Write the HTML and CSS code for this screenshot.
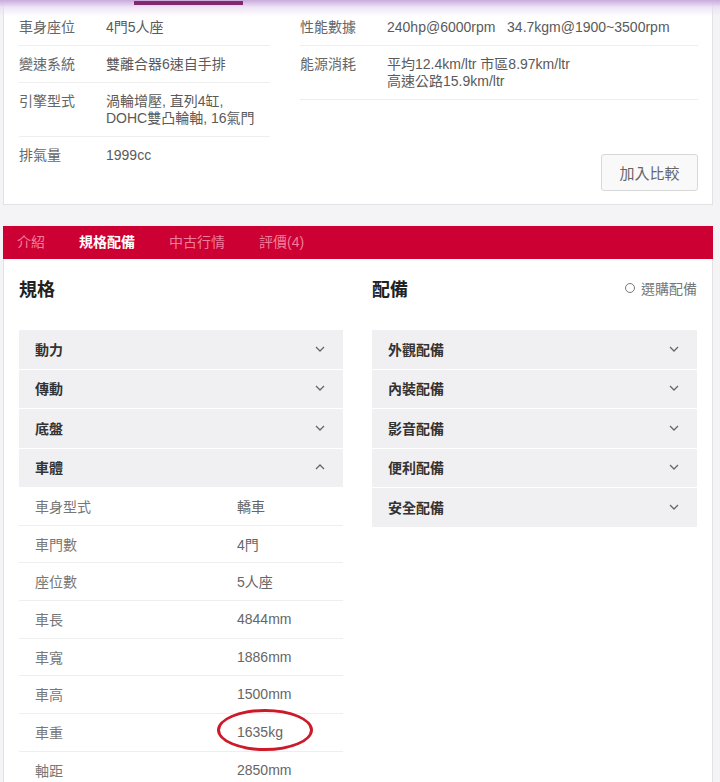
FILE: index.html
```html
<!DOCTYPE html>
<html lang="zh-Hant">
<head>
  <meta charset="UTF-8">
  <meta name="viewport" content="width=device-width, initial-scale=1.0">
  <title>規格配備</title>
  <link rel="stylesheet" href="styles.css">
</head>
<body>
  <div class="nav-shadow"><span class="nav-active"></span></div>

  <div class="page">
    <section class="summary">
      <div class="summary-col">
        <div class="summary-row"><span class="summary-label">車身座位</span><span class="summary-value">4門5人座</span></div>
        <div class="summary-row"><span class="summary-label">變速系統</span><span class="summary-value">雙離合器6速自手排</span></div>
        <div class="summary-row"><span class="summary-label">引擎型式</span><span class="summary-value">渦輪增壓, 直列4缸,<br>DOHC雙凸輪軸, 16氣門</span></div>
        <div class="summary-row"><span class="summary-label">排氣量</span><span class="summary-value">1999cc</span></div>
      </div>
      <div class="summary-col">
        <div class="summary-row"><span class="summary-label">性能數據</span><span class="summary-value">240hp@6000rpm&nbsp;&nbsp; 34.7kgm@1900~3500rpm</span></div>
        <div class="summary-row"><span class="summary-label">能源消耗</span><span class="summary-value">平均12.4km/ltr 市區8.97km/ltr<br>高速公路15.9km/ltr</span></div>
        <button class="compare-btn">加入比較</button>
      </div>
    </section>

    <nav class="tabs">
      <a class="tab">介紹</a>
      <a class="tab active">規格配備</a>
      <a class="tab">中古行情</a>
      <a class="tab">評價(4)</a>
    </nav>

    <section class="detail">
      <div class="detail-col">
        <div class="detail-head">
          <h2>規格</h2>
        </div>
        <div class="accordion">
          <div class="acc-item">動力<svg class="chev" viewBox="0 0 10 6"><polyline points="1,1 5,5 9,1"/></svg></div>
          <div class="acc-item">傳動<svg class="chev" viewBox="0 0 10 6"><polyline points="1,1 5,5 9,1"/></svg></div>
          <div class="acc-item">底盤<svg class="chev" viewBox="0 0 10 6"><polyline points="1,1 5,5 9,1"/></svg></div>
          <div class="acc-item">車體<svg class="chev" viewBox="0 0 10 6"><polyline points="1,5 5,1 9,5"/></svg></div>
          <div class="spec-list">
            <div class="spec-row"><span class="spec-label">車身型式</span><span class="spec-value">轎車</span></div>
            <div class="spec-row"><span class="spec-label">車門數</span><span class="spec-value">4門</span></div>
            <div class="spec-row"><span class="spec-label">座位數</span><span class="spec-value">5人座</span></div>
            <div class="spec-row"><span class="spec-label">車長</span><span class="spec-value">4844mm</span></div>
            <div class="spec-row"><span class="spec-label">車寬</span><span class="spec-value">1886mm</span></div>
            <div class="spec-row"><span class="spec-label">車高</span><span class="spec-value">1500mm</span></div>
            <div class="spec-row"><span class="spec-label">車重</span><span class="spec-value marked">1635kg<span class="mark-ring"></span></span></div>
            <div class="spec-row"><span class="spec-label">軸距</span><span class="spec-value">2850mm</span></div>
          </div>
        </div>
      </div>

      <div class="detail-col">
        <div class="detail-head">
          <h2>配備</h2>
          <span class="legend"><span class="legend-dot"></span>選購配備</span>
        </div>
        <div class="accordion">
          <div class="acc-item">外觀配備<svg class="chev" viewBox="0 0 10 6"><polyline points="1,1 5,5 9,1"/></svg></div>
          <div class="acc-item">內裝配備<svg class="chev" viewBox="0 0 10 6"><polyline points="1,1 5,5 9,1"/></svg></div>
          <div class="acc-item">影音配備<svg class="chev" viewBox="0 0 10 6"><polyline points="1,1 5,5 9,1"/></svg></div>
          <div class="acc-item">便利配備<svg class="chev" viewBox="0 0 10 6"><polyline points="1,1 5,5 9,1"/></svg></div>
          <div class="acc-item">安全配備<svg class="chev" viewBox="0 0 10 6"><polyline points="1,1 5,5 9,1"/></svg></div>
        </div>
      </div>
    </section>
  </div>
</body>
</html>
```

FILE: styles.css
```css
body {
  font-family: "Liberation Sans", "Noto Sans CJK TC", sans-serif;
  margin: 0;
  padding: 0;
  background-color: #f4f4f6;
  color: #333;
  font-size: 14px;
}

/* fixed header edge bleeding over the page top */
.nav-shadow {
  position: absolute;
  top: 0;
  left: 0;
  right: 0;
  height: 16px;
  background: linear-gradient(#c9aadc, rgba(232, 220, 242, 0.75) 45%, rgba(255, 255, 255, 0));
  z-index: 2;
}

.nav-active {
  position: absolute;
  left: 134px;
  top: 1px;
  width: 109px;
  height: 4px;
  background-color: #83286f;
}

.page {
  padding: 0 7px 0 3px;
}

/* summary card */
.summary {
  display: grid;
  grid-template-columns: 251px 1fr;
  column-gap: 30px;
  padding: 9px 14px 15px 15px;
  background-color: white;
  border: 1px solid #e2e2e4;
  border-top: none;
  height: 205px;
  box-sizing: border-box;
}

.summary-col {
  display: flex;
  flex-direction: column;
}

.summary-row {
  display: flex;
  padding: 10px 0 9px;
  line-height: 17px;
  border-bottom: 1px solid #eeeeee;
}

.summary-col:first-child .summary-row:last-child {
  border-bottom: none;
}

.summary-label {
  width: 87px;
  flex-shrink: 0;
  color: #666;
}

.summary-value {
  color: #5a5a5a;
}

.compare-btn {
  align-self: flex-end;
  margin-top: 54px;
  width: 97px;
  height: 37px;
  font-family: inherit;
  font-size: 15px;
  color: #666;
  background-color: #f9f9fa;
  border: 1px solid #d8d8d8;
  border-radius: 3px;
}

/* tab bar */
.tabs {
  display: flex;
  gap: 34px;
  margin-top: 21px;
  padding: 0 0 3px 14px;
  height: 33px;
  box-sizing: border-box;
  align-items: center;
  background-color: #cc0033;
}

.tab {
  color: #f07e9c;
  font-size: 14px;
}

.tab.active {
  color: white;
  font-weight: bold;
}

/* specs and equipment */
.detail {
  display: grid;
  grid-template-columns: 324px 325px;
  column-gap: 29px;
  padding: 0 15px 0 15px;
  background-color: white;
  border: 1px solid #e2e2e4;
  border-top: none;
}

.detail-head {
  display: flex;
  justify-content: space-between;
  align-items: center;
  padding-top: 17px;
  height: 24px;
  margin-bottom: 30px;
}

.detail-head h2 {
  margin: 0;
  font-size: 18px;
  font-weight: bold;
  color: #222;
}

.legend {
  display: flex;
  align-items: center;
  gap: 6px;
  color: #777;
  font-size: 14px;
}

.legend-dot {
  width: 8px;
  height: 8px;
  border: 1.5px solid #777;
  border-radius: 50%;
}

.acc-item {
  display: flex;
  justify-content: space-between;
  align-items: center;
  box-sizing: border-box;
  height: 39.5px;
  padding: 0 16px 1px;
  background-color: #f0f0f3;
  border-bottom: 1px solid white;
  font-weight: bold;
  font-size: 14px;
  color: #333;
}

.chev {
  width: 10px;
  height: 6px;
  margin-right: 2px;
  fill: none;
  stroke: #666;
  stroke-width: 1.3;
}

.spec-row {
  display: flex;
  align-items: center;
  height: 37.7px;
  box-sizing: border-box;
  padding: 0 16px 1px;
  border-bottom: 1px solid #eeeeee;
  color: #777;
}

.spec-label {
  width: 202px;
}

.spec-value {
  color: #666;
}

.marked {
  position: relative;
}

.mark-ring {
  position: absolute;
  left: -20px;
  top: -15px;
  width: 90px;
  height: 36px;
  border: 3px solid #cc1a2a;
  border-radius: 50%;
}
```
